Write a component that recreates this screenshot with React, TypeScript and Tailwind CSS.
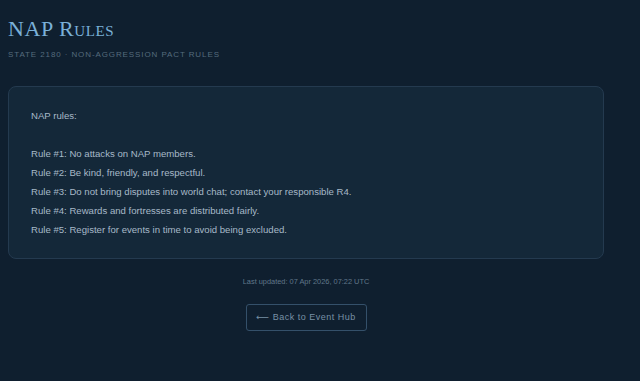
import React from "react";

const rules = [
  "Rule #1: No attacks on NAP members.",
  "Rule #2: Be kind, friendly, and respectful.",
  "Rule #3: Do not bring disputes into world chat; contact your responsible R4.",
  "Rule #4: Rewards and fortresses are distributed fairly.",
  "Rule #5: Register for events in time to avoid being excluded.",
];

export default function App() {
  return (
    <div className="min-h-[381px] w-full bg-[#0f1f2f] px-2 pt-[15px] pb-10 font-['Liberation_Sans',sans-serif]">
      <div className="w-[596px]">
        <h1 className="font-['Liberation_Serif',serif] text-[22px] leading-[28px] tracking-[0.6px] text-[#7ab0d8] [font-variant:small-caps]">
          NAP Rules
        </h1>
        <p className="mt-[6px] text-[8px] leading-[12px] tracking-[0.9px] text-[#556b7d] uppercase">
          State 2180 · Non-Aggression Pact Rules
        </p>
        <div className="mt-[25px] rounded-lg border border-[#243a4f] bg-[#142839] px-[22px] pt-[19px] pb-[19px] text-[9.6px] leading-[19px] text-[#a7b9c8]">
          <p>NAP rules:</p>
          <p>&nbsp;</p>
          {rules.map((r) => (
            <p key={r}>{r}</p>
          ))}
        </div>
        <p className="mt-[17px] text-center text-[7.4px] leading-[12px] text-[#60778a]">
          Last updated: 07 Apr 2026, 07:22 UTC
        </p>
        <div className="mt-[16px] flex justify-center">
          <button className="flex h-[27px] w-[121px] items-center justify-center gap-[3px] rounded-[3px] border border-[#34506a] bg-transparent text-[9px] tracking-[0.5px] text-[#7890a5]">
            <span className="font-['DejaVu_Sans',sans-serif] text-[9px]">⟵</span>
            <span>Back to Event Hub</span>
          </button>
        </div>
      </div>
    </div>
  );
}
